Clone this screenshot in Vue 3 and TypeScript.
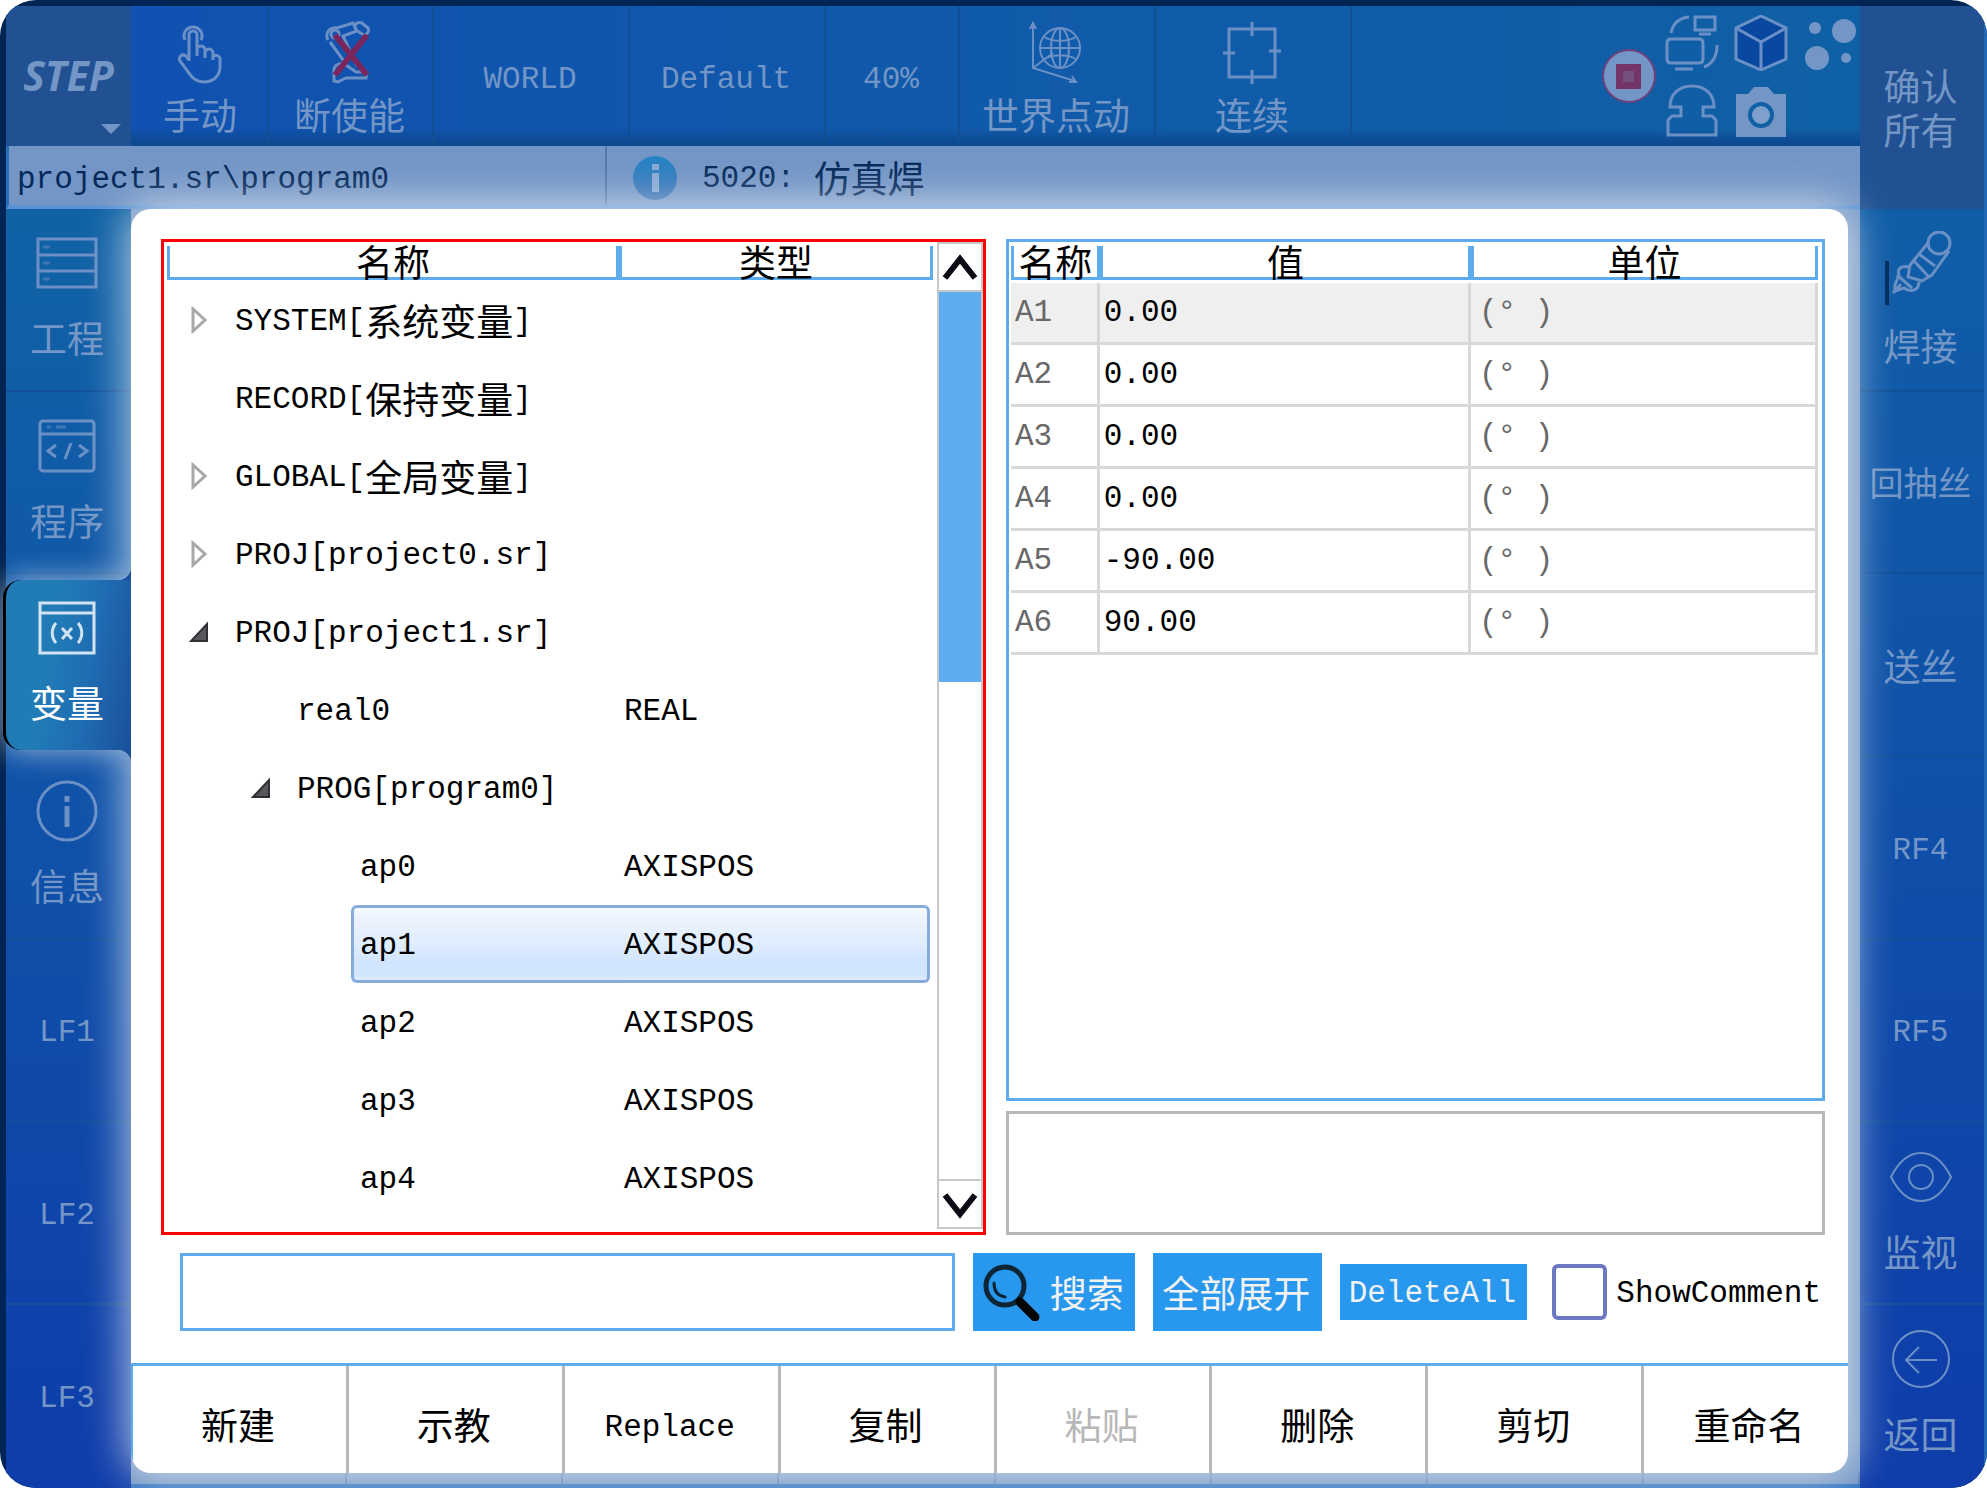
<script setup lang="ts">
import { ref } from 'vue'

interface TreeRow {
  level: 0 | 1 | 2
  name: string
  type: string
  toggle?: 'open' | 'closed'
}

interface Axis {
  name: string
  value: string
}

interface Run {
  text: string
  han: boolean
}

const rows: TreeRow[] = [
  { level: 0, name: 'SYSTEM[系统变量]', type: '', toggle: 'closed' },
  { level: 0, name: 'RECORD[保持变量]', type: '' },
  { level: 0, name: 'GLOBAL[全局变量]', type: '', toggle: 'closed' },
  { level: 0, name: 'PROJ[project0.sr]', type: '', toggle: 'closed' },
  { level: 0, name: 'PROJ[project1.sr]', type: '', toggle: 'open' },
  { level: 1, name: 'real0', type: 'REAL' },
  { level: 1, name: 'PROG[program0]', type: '', toggle: 'open' },
  { level: 2, name: 'ap0', type: 'AXISPOS' },
  { level: 2, name: 'ap1', type: 'AXISPOS' },
  { level: 2, name: 'ap2', type: 'AXISPOS' },
  { level: 2, name: 'ap3', type: 'AXISPOS' },
  { level: 2, name: 'ap4', type: 'AXISPOS' },
]

const axes: Axis[] = [
  { name: 'A1', value: '0.00' },
  { name: 'A2', value: '0.00' },
  { name: 'A3', value: '0.00' },
  { name: 'A4', value: '0.00' },
  { name: 'A5', value: '-90.00' },
  { name: 'A6', value: '90.00' },
]

const actions = ['新建', '示教', 'Replace', '复制', '粘贴', '删除', '剪切', '重命名']

const selected = ref('ap1')
const query = ref('')
const showComment = ref(false)

// Chinese characters take two Latin cells, so they are set one size larger.
function runs(text: string): Run[] {
  return (text.match(/[\u4e00-\u9fff]+|[^\u4e00-\u9fff]+/g) ?? []).map((part) => ({
    text: part,
    han: /[\u4e00-\u9fff]/.test(part),
  }))
}
</script>

<template>
  <div class="device">
    <div class="main">
      <header class="topbar">
        <button class="logo" type="button">
          <span class="logo-text">STEP</span>
          <span class="logo-arrow"></span>
        </button>
        <button class="mode narrow" type="button">
          <svg class="mode-icon" viewBox="0 0 64 64">
            <path d="M27 41V15a4 4 0 0 1 8 0v15M35 36v-6a4 4 0 0 1 8 0v7M43 38v-5a4 4 0 0 1 8 0v7M51 40v-3a4 4 0 0 1 7 1v9c0 9-7 15-16 15-8 0-12-4-15-9L18 41c-2-4 2-8 6-5l3 4" transform="translate(-6 0)" />
            <path d="M17 20a9 9 0 1 1 16 0" />
          </svg>
          <span class="han">手动</span>
        </button>
        <button class="mode medium" type="button">
          <svg class="mode-icon" viewBox="0 0 64 64">
            <path d="M10 20c-4-8 3-13 9-12l16-5 4 8-14 5 14 30M12 22l16 22M16 61V50c0-6 8-8 12-5l10 7h10v6H28l-8 4zM38 10c-3-5 1-9 6-7l6 5c2 4-2 8-6 6z" />
            <circle cx="17" cy="14" r="4" />
            <path class="cross" d="M17 15l32 40M49 15L17 55" />
          </svg>
          <span class="han">断使能</span>
        </button>
        <button class="mode wide plain" type="button">WORLD</button>
        <button class="mode wide plain" type="button">Default</button>
        <button class="mode narrow plain" type="button">40%</button>
        <button class="mode wide" type="button">
          <svg class="mode-icon thin" viewBox="0 0 64 64">
            <ellipse cx="36" cy="28" rx="20" ry="20" />
            <ellipse cx="36" cy="28" rx="9" ry="20" />
            <path d="M16 28h40M36 8v40M20 17c9 5 23 5 32 0M20 39c9-5 23-5 32 0M9 4v44l42 13M9 48l20-15" />
            <path d="M6 9l3-6 3 6M45 62l7 0-4-6" />
          </svg>
          <span class="han">世界点动</span>
        </button>
        <button class="mode wide" type="button">
          <svg class="mode-icon" viewBox="0 0 64 64">
            <path d="M9 9h46v48H9zM32 2v14M32 50v14M3 33h12M49 31h12" />
          </svg>
          <span class="han">连续</span>
        </button>
        <div class="tools">
          <svg class="stop" viewBox="0 0 56 56">
            <circle cx="28" cy="28" r="26" fill="#7396c6" stroke="#6f3f7c" stroke-width="2" />
            <path d="M15 16h25v25H15z" fill="#733468" />
            <path d="M22 23h11v11H22z" fill="#74507c" />
          </svg>
          <div class="tool-grid">
            <svg viewBox="0 0 54 56">
              <path d="M6 18C8 8 14 3 24 2M30 2h20v13H30zM34 19h12M6 24h28q4 0 4 4v16q0 4-4 4H6q-4 0-4-4V28q0-4 4-4zM10 54h18M52 30c0 12-5 19-13 22" />
            </svg>
            <svg viewBox="0 0 54 56">
              <path class="cube" d="M27 1l25 12v31L27 55 2 44V13z" />
              <path d="M2 13l25 14 25-14M27 27v28" />
            </svg>
            <svg viewBox="0 0 54 56">
              <g class="solid">
                <circle cx="12" cy="13" r="6" /><circle cx="41" cy="16" r="12" />
                <circle cx="14" cy="43" r="12" /><circle cx="43" cy="43" r="5" />
              </g>
            </svg>
            <svg viewBox="0 0 54 56">
              <path d="M5 24C5 11 14 3 27 3s22 8 22 21H38v9h9l4 4v15H3V37l4-4h9v-9z" />
            </svg>
            <svg viewBox="0 0 54 56">
              <path class="solid" d="M2 11h12l6-7h14l6 7h12v43H2z" />
              <circle class="lens" cx="27" cy="32" r="11" />
            </svg>
          </div>
        </div>
      </header>

      <div class="status">
        <div class="path">project1.sr\program0</div>
        <div class="message">
          <svg class="info" viewBox="0 0 46 46">
            <defs>
              <linearGradient id="infoFill" x1="0" y1="0" x2="0" y2="1">
                <stop offset="0" stop-color="#2484c4" />
                <stop offset="1" stop-color="#3c70b4" />
              </linearGradient>
            </defs>
            <circle cx="23" cy="23" r="22" fill="url(#infoFill)" />
            <path d="M20 9h7v6h-7zM20 18h7v19h-7z" fill="#86a8d4" />
          </svg>
          <span class="mixed">
            <span v-for="(run, i) in runs('5020: 仿真焊')" :key="i" :class="{ han: run.han }">{{ run.text }}</span>
          </span>
        </div>
      </div>

      <div class="body">
        <nav class="side left">
          <button class="key" type="button">
            <svg class="key-icon" viewBox="0 0 64 64">
              <path d="M3 8h58v48H3zM3 24h58M3 40h58" />
              <path class="faint" d="M8 16h7M8 32h7M8 48h7" />
            </svg>
            <span class="han">工程</span>
          </button>
          <button class="key" type="button">
            <svg class="key-icon" viewBox="0 0 64 64">
              <rect x="5" y="7" width="54" height="50" rx="3" />
              <path d="M5 20h54M21 31l-8 6 8 6M44 31l8 6-8 6M36 29l-6 16" />
              <path class="faint" d="M12 13h4M21 13h10" />
            </svg>
            <span class="han">程序</span>
          </button>
          <button class="key active" type="button">
            <svg class="key-icon" viewBox="0 0 64 64">
              <path d="M5 7h54v50H5zM5 17h54M21 27c-5 6-5 14 0 20M43 27c5 6 5 14 0 20M27 32l10 11M37 32L27 43" />
            </svg>
            <span class="han">变量</span>
          </button>
          <button class="key" type="button">
            <svg class="key-icon" viewBox="0 0 64 64">
              <circle cx="32" cy="32" r="29" />
              <path d="M32 17v6M32 27v21" stroke-width="5" />
            </svg>
            <span class="han">信息</span>
          </button>
          <button class="key plain" type="button">LF1</button>
          <button class="key plain" type="button">LF2</button>
          <button class="key plain" type="button">LF3</button>
        </nav>

        <div class="work">
          <main class="panel">
            <div class="columns">
              <section class="tree">
                <div class="tree-view">
                  <table class="tree-table">
                    <thead>
                      <tr>
                        <th class="col-name"><div class="head han">名称</div></th>
                        <th class="col-type"><div class="head han">类型</div></th>
                      </tr>
                    </thead>
                    <tbody>
                      <tr v-for="row in rows" :key="row.name" :class="{ selected: row.name === selected }" @click="selected = row.name">
                        <td>
                          <div class="node" :class="'level-' + row.level">
                            <span class="slot">
                              <button v-if="row.toggle" class="toggle" type="button" :aria-expanded="row.toggle === 'open'" :aria-label="row.name">
                                <svg v-if="row.toggle === 'closed'" viewBox="0 0 20 28">
                                  <path d="M4 3v22L16 14z" fill="#fff" stroke="#a8a8a8" stroke-width="3" />
                                </svg>
                                <svg v-else viewBox="0 0 20 28">
                                  <path d="M18 6v17H2z" fill="#58585c" stroke="#303034" stroke-width="2" />
                                </svg>
                              </button>
                            </span>
                            <span class="label mixed">
                              <span v-for="(run, i) in runs(row.name)" :key="i" :class="{ han: run.han }">{{ run.text }}</span>
                            </span>
                          </div>
                        </td>
                        <td><div class="type">{{ row.type }}</div></td>
                      </tr>
                    </tbody>
                  </table>
                </div>
                <div class="scroll">
                  <button class="arrow" type="button" aria-label="Up">
                    <svg viewBox="0 0 40 40"><path d="M5 31L20 12l15 19" /></svg>
                  </button>
                  <div class="track"><div class="thumb"></div></div>
                  <button class="arrow" type="button" aria-label="Down">
                    <svg viewBox="0 0 40 40"><path d="M5 11l15 19 15-19" /></svg>
                  </button>
                </div>
              </section>

              <section class="detail">
                <div class="values">
                  <table class="value-table">
                    <thead>
                      <tr>
                        <th class="col-axis"><div class="head han">名称</div></th>
                        <th class="col-value"><div class="head han">值</div></th>
                        <th><div class="head han">单位</div></th>
                      </tr>
                    </thead>
                    <tbody>
                      <tr v-for="axis in axes" :key="axis.name">
                        <td class="muted">{{ axis.name }}</td>
                        <td>{{ axis.value }}</td>
                        <td class="muted unit">(° )</td>
                      </tr>
                    </tbody>
                  </table>
                </div>
                <div class="comment"></div>
              </section>
            </div>

            <form class="search" @submit.prevent>
              <input v-model="query" class="query" type="text" aria-label="搜索" />
              <button class="blue tall find han" type="submit">
                <svg viewBox="0 0 58 58">
                  <circle cx="23" cy="23" r="19" fill="none" stroke="#0d2535" stroke-width="5" />
                  <path d="M12 20c0 8 4 13 11 14" fill="none" stroke="#0d2535" stroke-width="3" stroke-linecap="round" />
                  <path d="M38 39l15 15" stroke="#050505" stroke-width="9" stroke-linecap="round" />
                </svg>
                搜索
              </button>
              <button class="blue tall expand han" type="button">全部展开</button>
              <button class="blue delete" type="button">DeleteAll</button>
              <label class="check">
                <input v-model="showComment" type="checkbox" />
                <span>ShowComment</span>
              </label>
            </form>

            <div class="actions">
              <button
                v-for="action in actions"
                :key="action"
                type="button"
                :class="{ han: action !== 'Replace' }"
                :disabled="action === '粘贴'"
              >{{ action }}</button>
            </div>
          </main>
          <div class="ledge"><i v-for="action in actions" :key="action"></i></div>
        </div>
      </div>
    </div>

    <nav class="side right">
      <button class="confirm han" type="button"><span>确认</span><span>所有</span></button>
      <button class="key weld" type="button">
        <svg class="key-icon" viewBox="0 0 64 64">
          <circle cx="50" cy="12" r="11" />
          <path d="M39 12L21 34l-2 12 14 4 10-6 17-24M30 23l16 12M25 30l14 15M20 36c-8-2-12 2-10 8l-4 10 0 6 9-3c7 5 15 2 15-6M8 44l15 13M4 62l8-9" />
        </svg>
        <span class="han">焊接</span>
      </button>
      <button class="key plain words" type="button"><span class="han compact">回抽丝</span></button>
      <button class="key plain words" type="button"><span class="han">送丝</span></button>
      <button class="key plain" type="button">RF4</button>
      <button class="key plain" type="button">RF5</button>
      <button class="key" type="button">
        <svg class="key-icon thin" viewBox="0 0 64 64">
          <path d="M2 32C10 16 20 8 32 8s22 8 30 24C54 48 44 56 32 56S10 48 2 32z" />
          <circle cx="32" cy="32" r="12" />
        </svg>
        <span class="han">监视</span>
      </button>
      <button class="key" type="button">
        <svg class="key-icon thin" viewBox="0 0 64 64">
          <circle cx="32" cy="32" r="28" />
          <path d="M48 33H18M30 20L17 33l13 13" />
        </svg>
        <span class="han">返回</span>
      </button>
    </nav>
  </div>
</template>

<style>
body {
  margin: 0;
  background: #fff;
}
</style>

<style scoped>
* {
  box-sizing: border-box;
}

.device {
  display: flex;
  min-height: 100vh;
  padding-top: 6px;
  padding-left: 6px;
  overflow: hidden;
  border-radius: 36px;
  background: #002554;
  color: #000;
  font-family: "Liberation Mono", "Noto Sans CJK SC", monospace;
  font-size: 31px;
  line-height: 40px;
}

button {
  margin: 0;
  padding: 0;
  border: 0;
  border-radius: 0;
  background: none;
  color: inherit;
  font: inherit;
}

.han {
  font-family: "Noto Sans CJK SC", sans-serif;
  font-size: 37px;
  font-weight: 400;
  line-height: 40px;
}

.mixed {
  display: flex;
  align-items: center;
  white-space: pre;
}

.mixed span:not(.han) {
  padding-top: 4px;
}

.main {
  display: flex;
  flex: 1;
  flex-direction: column;
  min-width: 0;
}

/* top bar */
.topbar {
  display: flex;
  height: 140px;
  background:
    linear-gradient(180deg, transparent 122px, #0d4a92 136px),
    linear-gradient(90deg, #1050b2, #105ba9 60%, #1060a5);
  color: #7396c6;
}

.logo {
  display: flex;
  flex: none;
  flex-direction: column;
  align-items: center;
  width: 125px;
  margin-right: 4px;
  padding-top: 46px;
  background: #215193;
}

.logo-text {
  font-family: "Open Sans", sans-serif;
  font-size: 41px;
  font-style: italic;
  font-weight: 700;
  line-height: 46px;
}

.logo-arrow {
  align-self: flex-end;
  margin: 26px 10px 0 0;
  border: 10px solid transparent;
  border-top-color: #7396c6;
  border-bottom: 0;
}

.mode {
  display: flex;
  flex-direction: column;
  align-items: center;
  gap: 10px;
  padding: 14px 2px 0 0;
  border-right: 2px solid #0f4f92;
  white-space: nowrap;
}

.mode.plain {
  justify-content: center;
  padding-top: 8px;
}

.narrow {
  flex: 0 1 134px;
}

.medium {
  flex: 0 1 165px;
}

.wide {
  flex: 0 1 196px;
}

.mode-icon {
  flex: none;
  width: 64px;
  height: 64px;
}

.mode-icon,
.tool-grid svg,
.key-icon {
  fill: none;
  stroke: #6a90c6;
  stroke-width: 3;
}

.mode-icon.thin,
.key-icon.thin {
  stroke-width: 2;
}

.mode-icon .cross {
  stroke: #78265c;
  stroke-width: 6;
}

.tools {
  display: flex;
  align-items: center;
  gap: 8px;
  margin-left: auto;
  padding-right: 3px;
}

.stop {
  width: 56px;
  height: 56px;
}

.tool-grid {
  display: grid;
  grid-template-columns: repeat(3, 54px);
  align-self: flex-start;
  gap: 12px 15px;
  padding-top: 9px;
}

.tool-grid svg {
  width: 54px;
  height: 56px;
}

.tool-grid .cube {
  fill: #0848a0;
}

.tool-grid .solid {
  fill: #7396c6;
  stroke: none;
}

.tool-grid .lens {
  fill: #7f9fcc;
  stroke: #1060a5;
  stroke-width: 4;
}

/* status line */
.status {
  display: flex;
  height: 63px;
  border-bottom: 4px solid #5c92d2;
  border-left: 3px solid #2470c0;
  background: #7396c6;
  color: #04295a;
}

.path {
  flex: none;
  width: 598px;
  padding: 14px 0 0 8px;
  border-right: 2px solid #5278ac;
}

.message {
  display: flex;
  align-items: flex-start;
  gap: 24px;
  padding: 9px 0 0 25px;
}

.info {
  width: 46px;
  height: 46px;
}

/* side keys */
.body {
  display: flex;
  flex: 1;
}

.side {
  display: flex;
  flex: none;
  flex-direction: column;
  background: linear-gradient(180deg, #1062a5, #105aa8 25%, #0f4fa9 55%, #0f3caa);
  color: #7396c6;
}

.left {
  width: 125px;
}

.right {
  width: 127px;
  border-right: 3px solid #2068b8;
}

.key {
  display: flex;
  flex: 1 0 180px;
  flex-direction: column;
  align-items: center;
  gap: 22px;
  padding: 22px 3px 0 0;
  border-bottom: 2px solid #0f5098;
  white-space: nowrap;
}

.key:last-child {
  border-bottom-color: transparent;
}

.key.plain {
  justify-content: center;
  padding-top: 6px;
}

.key.words {
  padding-top: 0;
}

.key-icon {
  flex: none;
  width: 64px;
  height: 64px;
}

.key-icon .faint {
  opacity: 0.5;
}

.key.active {
  position: relative;
  z-index: 2;
  border-color: transparent;
  color: #fff;
}

.key.active::before {
  content: "";
  position: absolute;
  z-index: -1;
  inset: 6px 0 5px -3px;
  border-left: 3px solid #000;
  border-radius: 18px 0 0 18px;
  background: linear-gradient(100deg, #217cb6 35%, #1f6cb2 65%, #1b509b);
  box-shadow: 0 0 30px rgba(255, 255, 255, 0.6);
}

/* inward curves where the tab joins the panel */
.key.active::after {
  content: "";
  position: absolute;
  z-index: -1;
  top: -8px;
  right: 0;
  bottom: -9px;
  width: 14px;
  background:
    radial-gradient(circle at 0 0, transparent 14px, #1b509b 15px) top / 14px 14px no-repeat,
    radial-gradient(circle at 0 100%, transparent 14px, #1b509b 15px) bottom / 14px 14px no-repeat;
}

.active .key-icon {
  stroke: #d2e4f2;
}

.confirm {
  display: flex;
  flex: none;
  flex-direction: column;
  align-items: center;
  justify-content: center;
  height: 203px;
  padding: 0 3px 2px 0;
  background: #215193;
  line-height: 44px;
}

.key.weld {
  gap: 30px;
  background: linear-gradient(#002a5c, #002a5c) 25px 52px / 4px 44px no-repeat;
}

.compact {
  font-size: 34px;
}

/* work area */
.work {
  display: flex;
  flex: 1;
  flex-direction: column;
  min-width: 0;
  padding-right: 12px;
  background: #7396c6;
}

.panel {
  position: relative;
  z-index: 1;
  display: flex;
  flex: 1;
  flex-direction: column;
  overflow: hidden;
  border-radius: 20px;
  background: #fff;
  box-shadow: 0 0 44px 2px rgba(255, 255, 255, 0.75);
}

.ledge {
  display: grid;
  grid-template-columns: repeat(8, 1fr);
  height: 15px;
  margin-right: -12px;
  border-bottom: 4px solid #2f74c0;
}

.ledge i {
  border-right: 2px solid #5c80b4;
}

.columns {
  display: flex;
  flex: 1;
  gap: 20px;
  padding: 30px 23px 0 30px;
}

.tree {
  display: flex;
  flex: 1 1 0;
  min-width: 0;
  border: 3px solid #f00;
}

.tree-view {
  flex: 1;
  min-width: 0;
  padding: 4px 4px 0 3px;
}

table {
  width: 100%;
  border-collapse: separate;
  border-spacing: 0;
  table-layout: fixed;
}

th,
td {
  padding: 0;
  text-align: left;
}

th {
  vertical-align: top;
}

.head {
  height: 34px;
  border: 3px solid #5cacee;
  border-top: 0;
  line-height: 30px;
  text-align: center;
}

.tree-table thead tr {
  height: 35px;
}

.col-name {
  width: 59%;
}

.node,
.type {
  display: flex;
  align-items: center;
  height: 78px;
}

.level-1 {
  padding-left: 62px;
}

.level-2 {
  padding-left: 125px;
}

.slot {
  flex: none;
  width: 59px;
  padding-left: 22px;
}

.toggle {
  display: block;
  width: 20px;
  height: 28px;
}

.toggle svg {
  display: block;
}

.label {
  flex: 1;
  height: 78px;
  padding-left: 9px;
}

.type {
  margin-right: 3px;
  padding: 4px 0 0 5px;
}

.selected .label,
.selected .type {
  border: 3px solid #86acde;
  background: linear-gradient(180deg, #f4f8fe, #e9f1fe 25%, #dcecfe 55%, #d2e5fe 75%, #d2e5fe 92%, #dfecfd);
}

.selected .label {
  padding-left: 6px;
  border-right: 0;
  border-radius: 6px 0 0 6px;
}

.selected .type {
  border-left: 0;
  border-radius: 0 6px 6px 0;
}

.scroll {
  display: flex;
  flex: none;
  flex-direction: column;
  width: 46px;
  padding-bottom: 3px;
}

.arrow {
  display: flex;
  align-items: center;
  justify-content: center;
  height: 50px;
  border: 2px solid #c8c8c8;
}

.arrow svg {
  width: 40px;
  height: 40px;
  fill: none;
  stroke: #0c0c14;
  stroke-width: 6;
}

.track {
  flex: 1;
  border: solid #c8c8c8;
  border-width: 0 2px;
}

.thumb {
  height: 44%;
  background: #5cacee;
}

.detail {
  display: flex;
  flex: 1 1 0;
  flex-direction: column;
  gap: 10px;
  min-width: 0;
}

.values {
  flex: 1;
  padding: 4px 4px 0 2px;
  border: 3px solid #5cacee;
}

.value-table thead tr {
  height: 37px;
}

.col-axis {
  width: 11%;
}

.col-value {
  width: 46%;
}

.value-table td {
  height: 62px;
  padding: 0 0 0 4px;
  border: solid #d8d8d8;
  border-width: 0 3px 3px 0;
  line-height: 50px;
}

.value-table .unit {
  padding-left: 8px;
}

.value-table tbody tr:first-child {
  background: #efefef;
}

.muted {
  color: #686868;
}

.comment {
  height: 124px;
  border: 3px solid #b8b8b8;
}

.search {
  display: flex;
  align-items: center;
  gap: 18px;
  height: 78px;
  margin: 18px 27px 32px 49px;
}

.query {
  flex: 1;
  min-width: 0;
  height: 78px;
  padding: 0 12px;
  border: 3px solid #5cacee;
  border-radius: 0;
  background: #fff;
  color: #000;
  font: inherit;
  outline: 0;
}

.blue {
  display: flex;
  flex: none;
  align-items: center;
  justify-content: center;
  background: #2898ee;
  color: #f2f2f2;
}

.tall {
  height: 78px;
}

.find {
  gap: 10px;
  width: 162px;
  padding-right: 3px;
}

.find svg {
  width: 58px;
  height: 58px;
}

.expand {
  width: 169px;
  padding-right: 3px;
}

.delete {
  width: 187px;
  height: 56px;
  padding: 4px 3px 0 0;
}

.check {
  display: flex;
  align-items: center;
  gap: 9px;
  padding-left: 7px;
}

.check span {
  padding-top: 4px;
}

.check input {
  appearance: none;
  width: 55px;
  height: 56px;
  margin: 0;
  border: 4px solid #6c78c4;
  border-radius: 6px;
  background: #fff;
}

.actions {
  display: grid;
  grid-template-columns: repeat(8, 1fr);
  height: 110px;
  margin-right: -12px;
  border-top: 3px solid #5cacee;
  border-left: 2px solid #5cacee;
}

.actions button {
  padding: 16px 3px 0 0;
  border-right: 3px solid #b8b8b8;
}

.actions .han {
  padding-top: 8px;
}

.actions button:disabled {
  color: #b8b8b8;
}
</style>
